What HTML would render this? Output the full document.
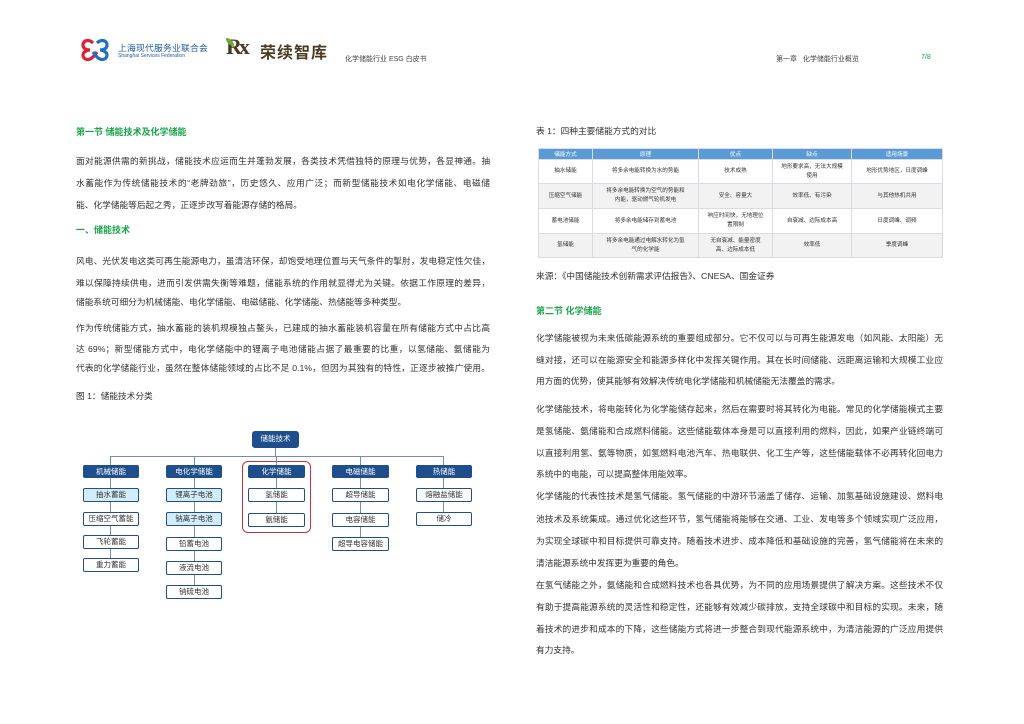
<!DOCTYPE html>
<html><head><meta charset="utf-8">
<style>
*{margin:0;padding:0;box-sizing:border-box}
body{width:1024px;height:724px;background:#fff;position:relative;overflow:hidden;font-family:"Liberation Sans","Noto Sans CJK SC",sans-serif;color:#333}
.a{position:absolute;white-space:nowrap}
.ln{position:absolute;font-size:8.7px;text-align:justify;text-align-last:justify;white-space:nowrap;height:13px;line-height:13px;color:#333;overflow:visible}
.l{left:76px;width:414px}
.r{left:536px;width:407px}
.g{color:#1aa64a;font-weight:bold;font-size:9px}
table{position:absolute;left:538px;top:148px;width:404px;border-collapse:collapse;table-layout:fixed;font-size:5.6px;color:#333}
td{border:1px solid #d8dde4;text-align:center;line-height:9px;padding:0 2px;overflow:hidden}
th{background:#5b9bd5;color:#fff;font-weight:normal;height:11px;border:1px solid #d8dde4;font-size:5.6px}
tr:nth-child(odd) td{background:#f2f2f2}
.bx{position:absolute;height:14px;border:1.5px solid #1f4e8c;border-radius:2px;font-size:7.5px;text-align:center;line-height:11px;background:#fff;color:#333}
.hd{background:#1f4e8c;color:#fff;border-color:#1f4e8c;height:13px}
.lt{background:#d3ecf9}
.v{position:absolute;width:1px;background:#6f8fb5}
</style></head><body>
<!-- header -->
<svg class="a" style="left:81px;top:39px" width="28" height="22" viewBox="0 0 28 22">
<path d="M12 4 C8 0 2 1 2 6 C2 10 6 11 9 11 C6 11 2 13 2 16 C2 21 8 22 12 18 L16 13" fill="none" stroke="#e02030" stroke-width="3.2"/>
<path d="M16 4 C20 0 26 1 26 6 C26 10 22 11 19 11 C22 11 26 13 26 16 C26 21 20 22 16 18 L12 13" fill="none" stroke="#1e6fc8" stroke-width="3.2"/>
</svg>
<div class="a" style="left:118px;top:41px;font-size:8.8px;color:#1e5aa8;letter-spacing:0.2px">上海现代服务业联合会</div>
<div class="a" style="left:118px;top:53px;font-size:5px;color:#1e5aa8">Shanghai Services Federation</div>
<div class="a" style="left:226px;top:34px;font-size:22px;font-weight:bold;color:#4a3a22;font-family:'Liberation Serif',serif;letter-spacing:-3px">Rx</div>
<div class="a" style="left:226px;top:38px;width:8px;height:8px;background:#6aab2e;border-radius:0 8px 0 8px"></div>
<div class="a" style="left:260px;top:39px;font-size:16px;font-weight:bold;color:#4a3a22;letter-spacing:1px">荣续智库</div>
<div class="a" style="left:345px;top:54px;font-size:7px;color:#444">化学储能行业 ESG 白皮书</div>
<div class="a" style="left:776px;top:54px;font-size:7px;color:#444">第一章&nbsp;&nbsp;&nbsp;化学储能行业概览</div>
<div class="a" style="left:921px;top:54px;font-size:7px;color:#1aa64a">7/8</div>

<!-- left column -->
<div class="a g" style="left:76px;top:125px">第一节 储能技术及化学储能</div>
<div class="ln l" style="top:155px">面对能源供需的新挑战，储能技术应运而生并蓬勃发展，各类技术凭借独特的原理与优势，各显神通。抽</div>
<div class="ln l" style="top:177px">水蓄能作为传统储能技术的“老牌劲旅”，历史悠久、应用广泛；而新型储能技术如电化学储能、电磁储</div>
<div class="ln" style="left:76px;top:199px">能、化学储能等后起之秀，正逐步改写着能源存储的格局。</div>
<div class="a g" style="left:76px;top:223px">一、储能技术</div>
<div class="ln l" style="top:255px">风电、光伏发电这类可再生能源电力，虽清洁环保，却饱受地理位置与天气条件的掣肘，发电稳定性欠佳，</div>
<div class="ln l" style="top:277px">难以保障持续供电，进而引发供需失衡等难题，储能系统的作用就显得尤为关键。依据工作原理的差异，</div>
<div class="ln" style="left:76px;top:296px">储能系统可细分为机械储能、电化学储能、电磁储能、化学储能、热储能等多种类型。</div>
<div class="ln l" style="top:322px">作为传统储能方式，抽水蓄能的装机规模独占鳌头，已建成的抽水蓄能装机容量在所有储能方式中占比高</div>
<div class="ln l" style="top:343px">达 69%；新型储能方式中，电化学储能中的锂离子电池储能占据了最重要的比重，以氢储能、氨储能为</div>
<div class="ln l" style="top:362px">代表的化学储能行业，虽然在整体储能领域的占比不足 0.1%，但因为其独有的特性，正逐步被推广使用。</div>
<div class="ln" style="left:76px;top:390px">图 1：储能技术分类</div>

<!-- chart -->
<div class="a" style="left:242px;top:461px;width:69px;height:72px;border:1.3px solid #c8323c;border-radius:6px"></div>
<div class="a" style="left:110px;top:456px;width:333px;height:1px;background:#6f8fb5"></div>
<div class="v" style="left:275px;top:446px;height:10px"></div>
<div class="v" style="left:110px;top:456px;height:10px"></div>
<div class="v" style="left:194px;top:456px;height:10px"></div>
<div class="v" style="left:276px;top:456px;height:10px"></div>
<div class="v" style="left:360px;top:456px;height:10px"></div>
<div class="v" style="left:443px;top:456px;height:10px"></div>
<div class="v" style="left:110px;top:478px;height:88px"></div>
<div class="v" style="left:194px;top:478px;height:112px"></div>
<div class="v" style="left:276px;top:478px;height:40px"></div>
<div class="v" style="left:360px;top:478px;height:64px"></div>
<div class="v" style="left:443px;top:478px;height:40px"></div>
<div class="bx hd" style="left:252px;top:431px;width:47px;height:17px;line-height:14px;border-radius:3px">储能技术</div>
<div class="bx hd" style="left:83px;top:465px;width:56px">机械储能</div>
<div class="bx hd" style="left:166px;top:465px;width:56px">电化学储能</div>
<div class="bx hd" style="left:248px;top:465px;width:57px">化学储能</div>
<div class="bx hd" style="left:332px;top:465px;width:57px">电磁储能</div>
<div class="bx hd" style="left:416px;top:465px;width:56px">热储能</div>
<div class="bx lt" style="left:83px;top:488px;width:56px">抽水蓄能</div>
<div class="bx" style="left:83px;top:512px;width:56px">压缩空气蓄能</div>
<div class="bx" style="left:83px;top:535px;width:56px">飞轮蓄能</div>
<div class="bx" style="left:83px;top:558px;width:56px">重力蓄能</div>
<div class="bx lt" style="left:166px;top:488px;width:56px">锂离子电池</div>
<div class="bx lt" style="left:166px;top:512px;width:56px">钠离子电池</div>
<div class="bx" style="left:166px;top:537px;width:56px">铅蓄电池</div>
<div class="bx" style="left:166px;top:561px;width:56px">液流电池</div>
<div class="bx" style="left:166px;top:585px;width:56px">钠硫电池</div>
<div class="bx" style="left:248px;top:488px;width:57px">氢储能</div>
<div class="bx" style="left:248px;top:513px;width:57px">氨储能</div>
<div class="bx" style="left:332px;top:488px;width:57px">超导储能</div>
<div class="bx" style="left:332px;top:513px;width:57px">电容储能</div>
<div class="bx" style="left:332px;top:537px;width:57px">超导电容储能</div>
<div class="bx" style="left:416px;top:488px;width:56px">熔融盐储能</div>
<div class="bx" style="left:416px;top:512px;width:56px">储冷</div>

<!-- right column -->
<div class="ln" style="left:536px;top:125px">表 1：四种主要储能方式的对比</div>
<table>
<colgroup><col style="width:54px"><col style="width:106px"><col style="width:74px"><col style="width:79px"><col style="width:91px"></colgroup>
<tr><th>储能方式</th><th>原理</th><th>优点</th><th>缺点</th><th>适用场景</th></tr>
<tr style="height:24px"><td>抽水储能</td><td>将多余电能转换为水的势能</td><td>技术成熟</td><td>地形要求高，无法大规模<br>使用</td><td>地形优势地区，日度调峰</td></tr>
<tr style="height:25px"><td>压缩空气储能</td><td>将多余电能转换为空气的势能和<br>内能，驱动燃气轮机发电</td><td>安全、容量大</td><td>效率低、有污染</td><td>与其他热机共用</td></tr>
<tr style="height:25px"><td>蓄电池储能</td><td>将多余电能储存到蓄电池</td><td>响应时间快，无地理位<br>置限制</td><td>自衰减、边际成本高</td><td>日度调峰、调频</td></tr>
<tr style="height:24px"><td>氢储能</td><td>将多余电能通过电解水转化为氢<br>气的化学能</td><td>无自衰减、能量密度<br>高、边际成本低</td><td>效率低</td><td>季度调峰</td></tr>
</table>
<div class="ln" style="left:536px;top:270px">来源：《中国储能技术创新需求评估报告》、CNESA、国金证券</div>
<div class="a g" style="left:536px;top:304px">第二节 化学储能</div>
<div class="ln r" style="top:332px">化学储能被视为未来低碳能源系统的重要组成部分。它不仅可以与可再生能源发电（如风能、太阳能）无</div>
<div class="ln r" style="top:354px">缝对接，还可以在能源安全和能源多样化中发挥关键作用。其在长时间储能、远距离运输和大规模工业应</div>
<div class="ln" style="left:536px;top:375px">用方面的优势，使其能够有效解决传统电化学储能和机械储能无法覆盖的需求。</div>
<div class="ln r" style="top:403px">化学储能技术，将电能转化为化学能储存起来，然后在需要时将其转化为电能。常见的化学储能模式主要</div>
<div class="ln r" style="top:425px">是氢储能、氨储能和合成燃料储能。这些储能载体本身是可以直接利用的燃料，因此，如果产业链终端可</div>
<div class="ln r" style="top:447px">以直接利用氢、氨等物质，如氢燃料电池汽车、热电联供、化工生产等，这些储能载体不必再转化回电力</div>
<div class="ln" style="left:536px;top:468px">系统中的电能，可以提高整体用能效率。</div>
<div class="ln r" style="top:490px">化学储能的代表性技术是氢气储能。氢气储能的中游环节涵盖了储存、运输、加氢基础设施建设、燃料电</div>
<div class="ln r" style="top:513px">池技术及系统集成。通过优化这些环节，氢气储能将能够在交通、工业、发电等多个领域实现广泛应用，</div>
<div class="ln r" style="top:535px">为实现全球碳中和目标提供可靠支持。随着技术进步、成本降低和基础设施的完善，氢气储能将在未来的</div>
<div class="ln" style="left:536px;top:557px">清洁能源系统中发挥更为重要的角色。</div>
<div class="ln r" style="top:579px">在氢气储能之外，氨储能和合成燃料技术也各具优势，为不同的应用场景提供了解决方案。这些技术不仅</div>
<div class="ln r" style="top:601px">有助于提高能源系统的灵活性和稳定性，还能够有效减少碳排放，支持全球碳中和目标的实现。未来，随</div>
<div class="ln r" style="top:623px">着技术的进步和成本的下降，这些储能方式将进一步整合到现代能源系统中，为清洁能源的广泛应用提供</div>
<div class="ln" style="left:536px;top:644px">有力支持。</div>
</body></html>
